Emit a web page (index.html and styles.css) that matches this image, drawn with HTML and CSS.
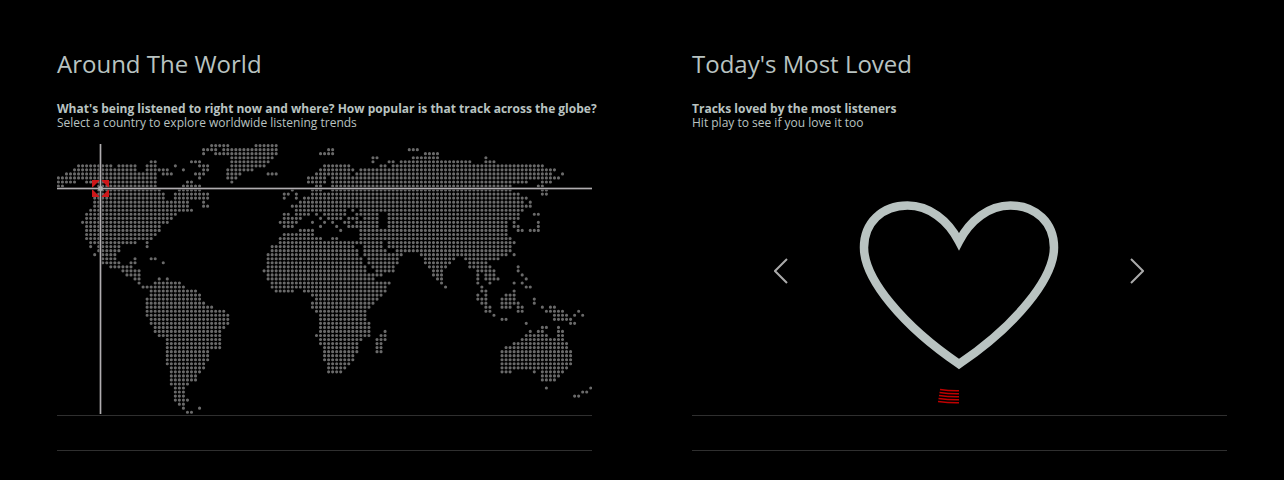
FILE: index.html
```
<!DOCTYPE html>
<html lang="en">
<head>
<meta charset="utf-8">
<title>Around The World</title>
<link rel="stylesheet" href="styles.css">
</head>
<body>
<main class="columns">
  <section class="panel">
    <h2 class="title">Around The World</h2>
    <div class="intro">
      <strong class="line">What's being listened to right now and where? How popular is that track across the globe?</strong>
      <span class="line">Select a country to explore worldwide listening trends</span>
    </div>
    <div class="stage">
      <svg class="map" viewBox="0 0 535 270" role="img" aria-label="World map">
        <g transform="translate(1.4 1.6) scale(4.033 4.04)"><path id="dots" class="dots"/></g>
        <path class="target" d="M35 36h8l-8 8zM52 36v8l-8-8zM35 53v-8l8 8zM52 53h-8l8-8z"/>
        <path class="halo" d="M43.5 0V270M0 44.5H535"/>
        <path class="cross" d="M43.5 0V270M0 44.5H535"/>
        <circle class="pin" cx="43.5" cy="44.5" r="2.5"/>
      </svg>
    </div>
    <div class="status"></div>
  </section>
  <section class="panel">
    <h2 class="title">Today's Most Loved</h2>
    <div class="intro">
      <strong class="line">Tracks loved by the most listeners</strong>
      <span class="line">Hit play to see if you love it too</span>
    </div>
    <div class="stage loved">
      <button class="arrow" type="button" aria-label="Previous"><svg viewBox="0 0 14 26" width="14" height="26"><path d="M13 1 1 13l12 12"/></svg></button>
      <div class="feature">
        <svg class="heart" viewBox="0 0 200 170" width="200" height="170" role="img" aria-label="Loved"><path d="M100 41.500C89 20 70 5.500 48.500 5.500C23 5.500 5 23 5 47.500C5 79 44 126 100 164C156 126 195 79 195 47.500C195 23 177 5.500 151.500 5.500C130 5.500 111 20 100 41.500Z"/></svg>
        <svg class="scribble" viewBox="0 0 42 16" width="42" height="16" aria-hidden="true"><path d="M2 1.500Q11 3 21 2.800M1.500 4.500Q11 6 21 5.800M1 7.500Q11 9 21 8.800M.5 10.500Q11 12 21 11.800M0 13.500Q11 15 21 14.800"/></svg>
      </div>
      <button class="arrow" type="button" aria-label="Next"><svg viewBox="0 0 14 26" width="14" height="26"><path d="m1 1 12 12L1 25"/></svg></button>
    </div>
    <div class="status"></div>
  </section>
</main>
<script src="map.js"></script>
</body>
</html>
```
FILE: styles.css
```
body {
  margin: 0;
  background: #000;
  color: #b9c3c1;
  font: 12px/14px "Open Sans", sans-serif;
}
.columns {
  display: grid;
  grid-template-columns: 1fr 1fr;
  gap: 100px;
  padding: 48px 57px 25px;
}
.panel {
  display: flex;
  flex-direction: column;
  min-width: 0;
}
.title {
  margin: 0 0 22px;
  font-size: 24px;
  line-height: 32px;
  font-weight: 400;
}
.intro {
  margin: 0 0 14px;
  white-space: nowrap;
}
.line {
  display: block;
}
.stage {
  flex: 1;
}
.map {
  display: block;
  width: 100%;
  height: auto;
}
.dots {
  fill: none;
  stroke: #6a6a6a;
  stroke-width: .78;
  stroke-linecap: round;
  stroke-dasharray: 0 1;
}
.target {
  fill: #cd1719;
}
.halo {
  stroke: #4a484a;
  stroke-width: 3;
  stroke-opacity: .8;
}
.cross {
  stroke: #b0adb0;
  stroke-width: 1;
}
.pin {
  fill: #aaa;
}
.loved {
  display: flex;
  align-items: center;
  justify-content: space-between;
  padding: 0 83px 0 82px;
}
.arrow {
  display: flex;
  padding: 0;
  border: 0;
  background: none;
  cursor: pointer;
  margin-bottom: 16px;
}
.arrow path {
  fill: none;
  stroke: #aaa;
  stroke-width: 2;
}
.feature {
  display: flex;
  flex-direction: column;
  align-items: center;
  align-self: flex-end;
  gap: 18px;
  margin-bottom: 10px;
}
.heart path {
  fill: none;
  stroke: #b9c3c1;
  stroke-width: 8.5;
  stroke-miterlimit: 8;
}
.scribble path {
  fill: none;
  stroke: #c00000;
  stroke-width: 1.4;
}
.status {
  height: 34px;
  margin-top: 1px;
  border: solid #2f2f2f;
  border-width: 1px 0;
}
```
FILE: map.js
```
// Each entry is one row of the map; ranges are the columns that hold a dot.
const rows = [
  "38-42 49-54",
  "36-39 41-54 67-68 87-89",
  "36 39-54 65-68 91-94",
  "43-53 78-79 88-94 106",
  "23-24 33-35 43-52 78 82-83 85-102 106-108",
  "5-13 15-19 22-24 29 35-37 43-51 66-72 80-81 83-120",
  "4-19 22-27 31 36-37 42-48 65-73 75-123",
  "2-24 26-28 34-36 42-45 52-54 64-72 74-122 125",
  "0-24 35 42-44 62-66 68-124",
  "0-4 7-24 32-33 43 62-66 68-116 120-122",
  "0-1 10-24 31-35 64-65 68-112 119-120",
  "10-25 30-35 58 63-65 68-112 120-121",
  "10-26 29-37 56-57 59 63-114 120-121",
  "9-26 29-37 56 59 61-116",
  "9-32 36 60-115 117",
  "9-32 36-37 58-117",
  "8-33 59-71 73 75-115",
  "7-29 56-57 59-62 64 66-71 74-79 82-114 118-119",
  "7-28 56-60 65 67-70 72-74 76-79 82-114",
  "6-27 55-59 63 66 68 71-72 74-79 82-111 113 119",
  "7-25 56-58 65 69 72-79 82-111 113-114 119",
  "7-25 60-63 70 75-111 114-115 117-119",
  "7-24 56-63 75-111",
  "7-23 55-65 68-69 75-112",
  "8-19 22 55-74 75-80 82-113",
  "8 10-15 22 53-73 76-80 82-112",
  "10-15 53-74 76-81 84-112",
  "9 11-14 52-74 76-85 90-111 113",
  "11-14 19 23-24 52-75 77-84 91-98 101-109",
  "11-15 18-19 26 52-75 77-84 91-97 102-106",
  "13-18 52-76 78-83 92-96 102-107 114",
  "16-20 51-76 79-83 93-95 104-108 114",
  "17-20 52-80 93-95 104 106-108 115",
  "19-20 25 27 52-78 94-95 104 106-109 116",
  "20 24-30 53-82 95 104 107 113 115",
  "21-31 53-81 96 105 116-117",
  "23-34 54-58 61-81 105-106 113",
  "23-35 63-80 104 106 111-113",
  "22-35 64-79 104-106 110-113 118",
  "22-36 63-78 105-106 110-114 118",
  "22-38 63-77 106-107 110-112 114-115 120 122-123",
  "22-41 64-76 106-107 114-115 121-125 129",
  "22-42 65-76 108 123-126 128 130",
  "23-42 65-76 110-111 123-127",
  "23-42 65-77 116 127-128",
  "24-41 65-77 120-121 124",
  "24-40 65-77 81 117 119-120 124-125",
  "25-40 64-77 80-81 116-121 124-125",
  "27-40 65-75 79-81 115-125",
  "27-40 65-74 79-80 113-126",
  "27-40 66-74 79-80 111-126",
  "27-37 66-74 79-80 110-127",
  "27-37 66-73 110-127",
  "27-37 66-73 110-127",
  "27-36 67-72 110-127",
  "28-36 67-71 110-126",
  "28-35 67-70 110-112 118 120-125",
  "28-34 120-124",
  "28-34 120-123",
  "28-32",
  "29-31 121 132",
  "29-31 130-131",
  "29-31 128-129",
  "29-32",
  "30-31",
  "31 35",
  "32-33"
];

const path = rows.map((row, y) => row.split(" ").map(range => {
  const [from, to = from] = range.split("-").map(Number);
  return `M${from} ${y}h${to - from + 0.05}`;
}).join("")).join("");

document.getElementById("dots").setAttribute("d", path);
```
